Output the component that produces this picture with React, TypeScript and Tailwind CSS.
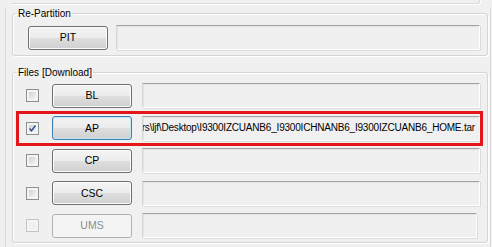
import React from 'react';
import clsx from 'clsx';

const FONT = { fontFamily: '"Liberation Sans", Arial, sans-serif' };

function WinButton({ label, focused, disabled }: { label: string; focused?: boolean; disabled?: boolean }) {
  return (
    <div
      className={clsx(
        'w-[80px] h-[24px] shrink-0 rounded-[3px] border flex items-center justify-center text-[10.5px] leading-none',
        disabled
          ? 'border-[#adb2b5] bg-[#f4f4f4] text-[#8d8d8d]'
          : 'text-black bg-[linear-gradient(to_bottom,#f4f4f4_0%,#ececec_48%,#dedede_52%,#d0d0d0_100%)]',
        !disabled && (focused ? 'border-[#3c7fb1] shadow-[inset_0_0_0_1px_#c4e5f6]' : 'border-[#707070] shadow-[inset_0_0_0_1px_#fbfbfb]')
      )}
    >
      {label}
    </div>
  );
}

function CheckBox({ checked, disabled }: { checked?: boolean; disabled?: boolean }) {
  return (
    <div
      className={clsx(
        'w-[13px] h-[13px] shrink-0 border p-[2px] relative',
        disabled ? 'border-[#c4c4c4] bg-[#f4f4f4]' : 'border-[#8e8f8f] bg-[#f4f4f4]'
      )}
    >
      <div
        className={clsx(
          'w-full h-full',
          disabled ? 'bg-[#f0f0f0]' : 'bg-[linear-gradient(135deg,#cfd2d6_0%,#e6e7e8_60%,#f4f4f4_100%)]'
        )}
      />
      {checked && (
        <svg className="absolute left-[1px] top-[1px]" width="9" height="9" viewBox="0 0 9 9">
          <path d="M1.5 4.5 L3.5 6.8 L7.5 1.5" fill="none" stroke="#3b4f9a" strokeWidth="1.5" />
        </svg>
      )}
    </div>
  );
}

function Field({ text, narrow }: { text?: string; narrow?: boolean }) {
  return (
    <div
      className={clsx(
        'h-[25px] flex-1 min-w-0 overflow-hidden flex justify-end items-start pt-[4px] pr-[4px] whitespace-nowrap text-[10px] tracking-[-0.2px] leading-[13px] text-black',
        'border border-t-[#a3a3a3] border-l-[#d6d6d6] border-b-white border-r-white bg-[#f0f0f0] shadow-[inset_1px_1px_0_#e4e4e4,1px_1px_0_#dcdcdc]',
        narrow && 'mr-[3px]'
      )}
    >
      <span className="shrink-0">{text}</span>
    </div>
  );
}

const rows = [
  { label: 'BL' },
  { label: 'AP', checked: true, focused: true, text: 'C:\\Users\\ljf\\Desktop\\I9300IZCUANB6_I9300ICHNANB6_I9300IZCUANB6_HOME.tar' },
  { label: 'CP' },
  { label: 'CSC' },
  { label: 'UMS', disabled: true },
];

export default function App() {
  return (
    <div className="w-[492px] h-[247px] bg-[#f0f0f0] overflow-hidden text-[10px]" style={FONT}>
      {/* edge of the panel above */}
      <div className="ml-[12px] w-[468px] h-[4px] border-b border-r border-[#d8d8d8] rounded-br-[3px] shadow-[1px_1px_0_#fff]" />

      <div className="ml-[5px] w-[486px] mt-[5px] h-[240px] border-l border-r border-[#dadada] pl-[6px] pr-[2px]">
        <fieldset className="min-w-0 border border-[#d5d5d5] rounded-[3px] shadow-[inset_1px_1px_0_#fff,1px_1px_0_#fff] -mt-[2px]">
          <legend className="ml-[4px] px-[1px] leading-[13px] text-black">Re-Partition</legend>
          <div className="flex items-center gap-[8px] pl-[15px] pr-[7px] pt-[5px] pb-[5px]">
            <WinButton label="PIT" />
            <Field />
          </div>
        </fieldset>

        <fieldset className="min-w-0 mt-[10px] border border-[#d5d5d5] rounded-[3px] shadow-[inset_1px_1px_0_#fff,1px_1px_0_#fff] h-[177px]">
          <legend className="ml-[4px] px-[1px] leading-[13px] text-black">Files [Download]</legend>
          <div className="flex flex-col pl-[13px] pr-[7px] pt-[4px]">
            {rows.map((r, i) => (
              <div key={r.label} className={clsx('relative flex items-center h-[25px]', i > 0 && 'mt-[7.5px]')}>
                <CheckBox checked={r.checked} disabled={r.disabled} />
                <div className="ml-[13px]">
                  <WinButton label={r.label} focused={r.focused} disabled={r.disabled} />
                </div>
                <div className="ml-[10px] flex-1 min-w-0 flex">
                  <Field text={r.text} narrow={r.disabled} />
                </div>
                {r.focused && (
                  <div className="absolute -left-[10px] -right-[3px] -top-[5px] -bottom-[5px] border-[3px] border-[#e3161c] pointer-events-none" />
                )}
              </div>
            ))}
          </div>
        </fieldset>
      </div>
    </div>
  );
}
